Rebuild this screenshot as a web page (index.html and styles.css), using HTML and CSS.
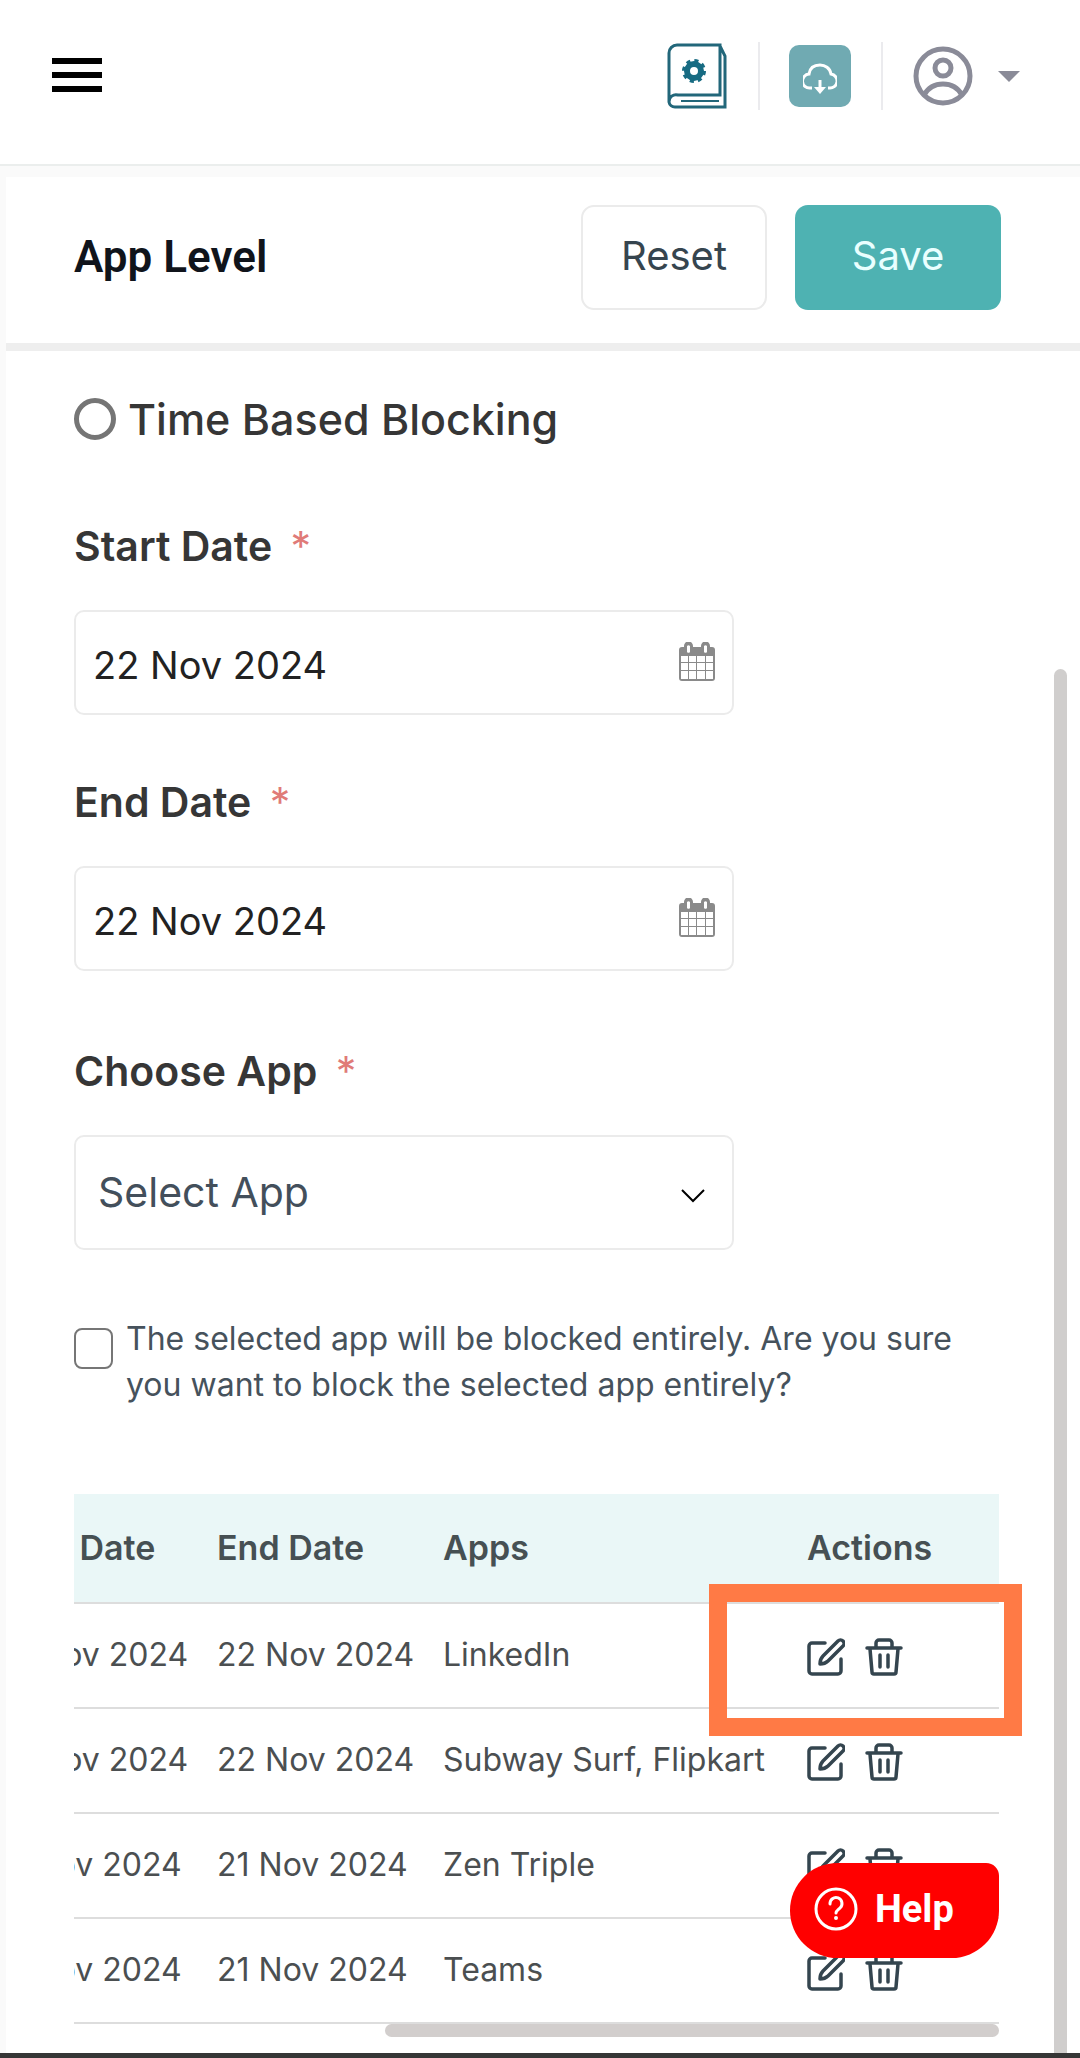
FILE: index.html
```html
<!DOCTYPE html>
<html lang="en">
<head>
  <meta charset="UTF-8">
  <meta name="viewport" content="width=device-width, initial-scale=1.0">
  <title>App Level</title>
  <link rel="stylesheet" href="styles.css">
</head>
<body>
  <!-- icons used more than once -->
  <svg class="sprite" aria-hidden="true">
    <symbol id="icon-calendar" viewBox="0 0 36 39">
      <path fill="#8a8a8a" fill-rule="evenodd" d="M3 5H5V4a4 4 0 0 1 9 0v1h8V4a4 4 0 0 1 9 0v1h2a3 3 0 0 1 3 3v28a3 3 0 0 1-3 3H3a3 3 0 0 1-3-3V8a3 3 0 0 1 3-3zM8 4v6a2 2 0 0 0 3 0V4a2 2 0 0 0-3 0zM25 4v6a2 2 0 0 0 3 0V4a2 2 0 0 0-3 0zM2 14v6h7v-6zM10 14v6h7v-6zM18 14v6h8v-6zM27 14v6h7v-6zM2 21v7h7v-7zM10 21v7h7v-7zM18 21v7h8v-7zM27 21v7h7v-7zM2 29v8h7v-8zM10 29v8h7v-8zM18 29v8h8v-8zM27 29v8h7v-8z"/>
    </symbol>
    <symbol id="icon-edit" viewBox="0 0 38 38">
      <g fill="none" stroke="#34454f" stroke-width="3.5" stroke-linecap="round" stroke-linejoin="round">
        <path d="M18 5H5a3 3 0 0 0-3 3v25a3 3 0 0 0 3 3h26a3 3 0 0 0 3-3V21"/>
        <path d="M31 3a3 3 0 0 1 5 5L21 23c-2 2-5 3-8 3 0-3 1-6 3-8z"/>
      </g>
    </symbol>
    <symbol id="icon-trash" viewBox="0 0 38 38">
      <g fill="none" stroke="#34454f" stroke-width="3.5" stroke-linecap="round" stroke-linejoin="round">
        <path d="M2 10h34M5 11l2 23a2 2 0 0 0 2 2h20a2 2 0 0 0 2-2l2-23M11 9V5a3 3 0 0 1 3-3h10a3 3 0 0 1 3 3v4"/>
        <path d="M15 17v12M23 17v12"/>
      </g>
    </symbol>
  </svg>

  <header class="topbar">
    <button class="menu-btn" aria-label="Menu"><span></span><span></span><span></span></button>
    <div class="topbar-tools">
      <a class="tool" href="#" aria-label="Guide">
        <svg width="60" height="66" viewBox="0 0 60 66" fill="none" stroke="#22677a" stroke-width="3">
          <path d="M2 59V10a8 8 0 0 1 8-8h43v50H11a7 7 0 0 0-9 7a6 6 0 0 0 6 5h50V13L53 3"/>
          <path d="M14 58h38" stroke-width="2"/>
          <circle cx="27" cy="28" r="7" stroke="#176b82" stroke-width="6"/>
          <circle cx="27" cy="28" r="10" stroke="#176b82" stroke-width="4" stroke-dasharray="3.93 3.93"/>
        </svg>
      </a>
      <a class="tool tool-bordered" href="#" aria-label="Download">
        <span class="cloud-box">
          <svg width="34" height="32" viewBox="0 0 34 32" fill="none" stroke="#fff" stroke-width="3">
            <path d="M9 25H7A7 7 0 0 1 6 11C7 4 12 2 17 2s10 3 11 9a7 7 0 0 1-2 14h-1"/>
            <path d="M17 17v9"/>
            <path d="M11 24h12l-6 7z" fill="#fff" stroke="none"/>
          </svg>
        </span>
      </a>
      <button class="tool user-btn" aria-label="Account">
        <svg width="60" height="60" viewBox="0 0 60 60" fill="none" stroke="#8a8b98" stroke-width="5">
          <circle cx="30" cy="30" r="27"/>
          <circle cx="30" cy="22" r="8"/>
          <path d="M11 49c4-7 11-11 19-11s15 4 19 11"/>
        </svg>
        <span class="caret"></span>
      </button>
    </div>
  </header>

  <main class="panel">
    <div class="panel-head">
      <h1>App Level</h1>
      <div class="panel-buttons">
        <button class="btn btn-reset" type="reset" form="blocking">Reset</button>
        <button class="btn btn-save" type="submit" form="blocking">Save</button>
      </div>
    </div>

    <div class="panel-body">
      <form id="blocking">
        <label class="radio-row">
          <input type="radio" name="mode">
          Time Based Blocking
        </label>

        <div class="field">
          <label for="start">Start Date <span class="required">*</span></label>
          <div class="control">
            <input id="start" type="text" value="22 Nov 2024">
            <svg class="calendar-icon"><use href="#icon-calendar"/></svg>
          </div>
        </div>

        <div class="field">
          <label for="end">End Date <span class="required">*</span></label>
          <div class="control">
            <input id="end" type="text" value="22 Nov 2024">
            <svg class="calendar-icon"><use href="#icon-calendar"/></svg>
          </div>
        </div>

        <div class="field field-app">
          <label for="app">Choose App <span class="required">*</span></label>
          <div class="control">
            <select id="app">
              <option>Select App</option>
            </select>
            <svg class="chevron" viewBox="0 0 24 14" fill="none" stroke="#000" stroke-width="2"><path d="M1 1l11 11L23 1"/></svg>
          </div>
        </div>

        <label class="check-row">
          <input type="checkbox">
          <span>The selected app will be blocked entirely. Are you sure you want to block the selected app entirely?</span>
        </label>
      </form>

      <div class="table-wrap">
        <div class="table-scroll">
          <table>
            <thead>
              <tr><th class="col-date">Start Date</th><th class="col-date">End Date</th><th>Apps</th><th class="col-actions">Actions</th></tr>
            </thead>
            <tbody>
              <tr>
                <td>22 Nov 2024</td><td>22 Nov 2024</td><td>LinkedIn</td>
                <td><div class="actions">
                  <button aria-label="Edit"><svg><use href="#icon-edit"/></svg></button>
                  <button aria-label="Delete"><svg><use href="#icon-trash"/></svg></button>
                </div></td>
              </tr>
              <tr>
                <td>22 Nov 2024</td><td>22 Nov 2024</td><td>Subway Surf, Flipkart</td>
                <td><div class="actions">
                  <button aria-label="Edit"><svg><use href="#icon-edit"/></svg></button>
                  <button aria-label="Delete"><svg><use href="#icon-trash"/></svg></button>
                </div></td>
              </tr>
              <tr>
                <td>21 Nov 2024</td><td>21 Nov 2024</td><td>Zen Triple</td>
                <td><div class="actions">
                  <button aria-label="Edit"><svg><use href="#icon-edit"/></svg></button>
                  <button aria-label="Delete"><svg><use href="#icon-trash"/></svg></button>
                </div></td>
              </tr>
              <tr>
                <td>21 Nov 2024</td><td>21 Nov 2024</td><td>Teams</td>
                <td><div class="actions">
                  <button aria-label="Edit"><svg><use href="#icon-edit"/></svg></button>
                  <button aria-label="Delete"><svg><use href="#icon-trash"/></svg></button>
                </div></td>
              </tr>
            </tbody>
          </table>
        </div>
        <div class="highlight"></div>
        <div class="scroll-x"></div>
        <button class="help-btn">
          <svg width="44" height="44" viewBox="0 0 44 44" fill="none" stroke="#fff" stroke-width="3" stroke-linecap="round">
            <circle cx="22" cy="22" r="20"/>
            <path d="M16 17a6 6 0 1 1 10 4c-2 2-4 3-4 5"/>
            <circle cx="22" cy="31" r="1" fill="#fff" stroke-width="2"/>
          </svg>
          Help
        </button>
      </div>
      <div class="scroll-y"></div>
    </div>
  </main>
  <div class="bottom-bar"></div>
</body>
</html>
```
FILE: styles.css
```css
* {
  box-sizing: border-box;
}
body {
  margin: 0;
  background: #fafafa;
  color: #363636;
  font-family: Inter, "Liberation Sans", sans-serif;
}
button, input, select {
  font-family: inherit;
  margin: 0;
}
button {
  border: none;
  background: none;
  padding: 0;
  cursor: pointer;
}
svg {
  display: block;
}
.sprite {
  display: none;
}

/* top bar */
.topbar {
  display: flex;
  justify-content: space-between;
  align-items: flex-start;
  height: 166px;
  padding: 42px 60px 0 52px;
  background: #fff;
  border-bottom: 2px solid #ebeeed;
}
.menu-btn {
  display: flex;
  flex-direction: column;
  gap: 8px;
  width: 50px;
  margin-top: 16px;
}
.menu-btn span {
  width: 100%;
  height: 6px;
  background: #000;
}
.topbar-tools {
  display: flex;
}
.tool {
  display: flex;
  align-items: center;
  height: 68px;
}
.tool-bordered {
  margin-left: 31px;
  padding: 0 30px 0 29px;
  border-left: 2px solid #ebebee;
  border-right: 2px solid #ebebee;
}
.cloud-box {
  display: flex;
  justify-content: center;
  align-items: center;
  width: 62px;
  height: 62px;
  padding-top: 6px;
  border-radius: 10px;
  background: #70aab2;
}
.user-btn {
  gap: 25px;
  margin-left: 30px;
}
.caret {
  border: 11px solid transparent;
  border-top-color: #8a8b98;
  border-bottom: none;
}

/* panel */
.panel {
  margin: 11px 0 0 6px;
  background: #fff;
}
.panel-head {
  display: flex;
  justify-content: space-between;
  align-items: flex-start;
  height: 174px;
  padding: 28px 79px 0 68px;
  border-bottom: 8px solid #eee;
}
h1 {
  margin: 0;
  color: #10141b;
  font: 600 44px/104px Roboto, sans-serif;
}
.panel-buttons {
  display: flex;
  gap: 28px;
}
.btn {
  height: 105px;
  padding-bottom: 4px;
  border-radius: 13px;
  font-size: 40px;
}
.btn-reset {
  width: 186px;
  border: 2px solid #ebebeb;
  color: #36454f;
}
.btn-save {
  width: 206px;
  background: #4eb2b2;
  color: #e9ffff;
}
.panel-body {
  position: relative;
  padding: 47px 81px 29px 68px;
}

/* form */
.radio-row {
  display: flex;
  align-items: center;
  gap: 12px;
  height: 42px;
  margin-bottom: 76px;
  font-size: 43px;
  line-height: 40px;
  font-weight: 500;
}
.radio-row input {
  appearance: none;
  width: 42px;
  height: 42px;
  border: 5px solid #757575;
  border-radius: 50%;
}
.field {
  max-width: 660px;
  margin-bottom: 57px;
}
.field-app {
  margin: 70px 0 66px;
}
.field label {
  display: block;
  margin-bottom: 34px;
  font-size: 41px;
  font-weight: 600;
  line-height: 60px;
}
.required {
  margin-left: 8px;
  color: #e07b78;
  font-weight: 400;
}
.control {
  position: relative;
}
.control input, .control select {
  appearance: none;
  display: block;
  width: 100%;
  height: 105px;
  padding: 4px 17px 0;
  border: 2px solid #ebebeb;
  border-radius: 10px;
  background: #fff;
  color: #222;
  font-size: 38px;
}
.control select {
  height: 115px;
  padding: 0 22px 2px;
  color: #434f5b;
  font-size: 41px;
}
.calendar-icon {
  position: absolute;
  top: 32px;
  right: 19px;
  width: 36px;
  height: 39px;
}
.chevron {
  position: absolute;
  top: 54px;
  right: 29px;
  width: 24px;
  height: 14px;
}
.check-row {
  display: flex;
  align-items: flex-start;
  gap: 13px;
  color: #46525c;
  font-size: 32px;
  line-height: 46px;
}
.check-row input {
  appearance: none;
  flex: none;
  width: 39px;
  height: 41px;
  margin-top: 12px;
  border: 2px solid #767676;
  border-radius: 8px;
}

/* table */
.table-wrap {
  position: relative;
  margin-top: 86px;
}
.table-scroll {
  display: flex;
  justify-content: flex-end;
  overflow: hidden;
}
table {
  flex: none;
  width: 1021px;
  table-layout: fixed;
  border-collapse: collapse;
  color: #4b4f51;
  font-size: 32px;
}
th, td {
  height: 105px;
  padding: 0 13px 2px;
  border-bottom: 2px solid #ddd;
  text-align: left;
  white-space: nowrap;
}
th {
  height: 109px;
  background: #eaf7f7;
  color: #465053;
  font-size: 34px;
  font-weight: 600;
}
.col-date {
  width: 226px;
}
.col-actions {
  width: 205px;
}
.actions {
  display: flex;
  gap: 20px;
  padding-top: 4px;
}
.actions svg {
  width: 38px;
  height: 38px;
}

/* things lying over the table */
.highlight {
  position: absolute;
  top: 90px;
  right: -23px;
  width: 313px;
  height: 152px;
  border: 18px solid #ff7a45;
}
.scroll-x {
  position: absolute;
  right: 0;
  bottom: -13px;
  width: 614px;
  height: 13px;
  border-radius: 7px;
  background: #d2cecd;
}
.scroll-y {
  position: absolute;
  top: 318px;
  right: 13px;
  bottom: 0;
  width: 13px;
  border-radius: 7px 7px 0 0;
  background: #d0cecd;
}
.help-btn {
  position: absolute;
  right: 0;
  bottom: 66px;
  display: flex;
  align-items: center;
  gap: 17px;
  width: 209px;
  height: 95px;
  padding: 0 0 4px 24px;
  border-radius: 48px 13px 48px 48px;
  background: #f00;
  color: #fff;
  font: 700 38px Roboto, sans-serif;
}
.bottom-bar {
  height: 6px;
  background: #363636;
}
```
